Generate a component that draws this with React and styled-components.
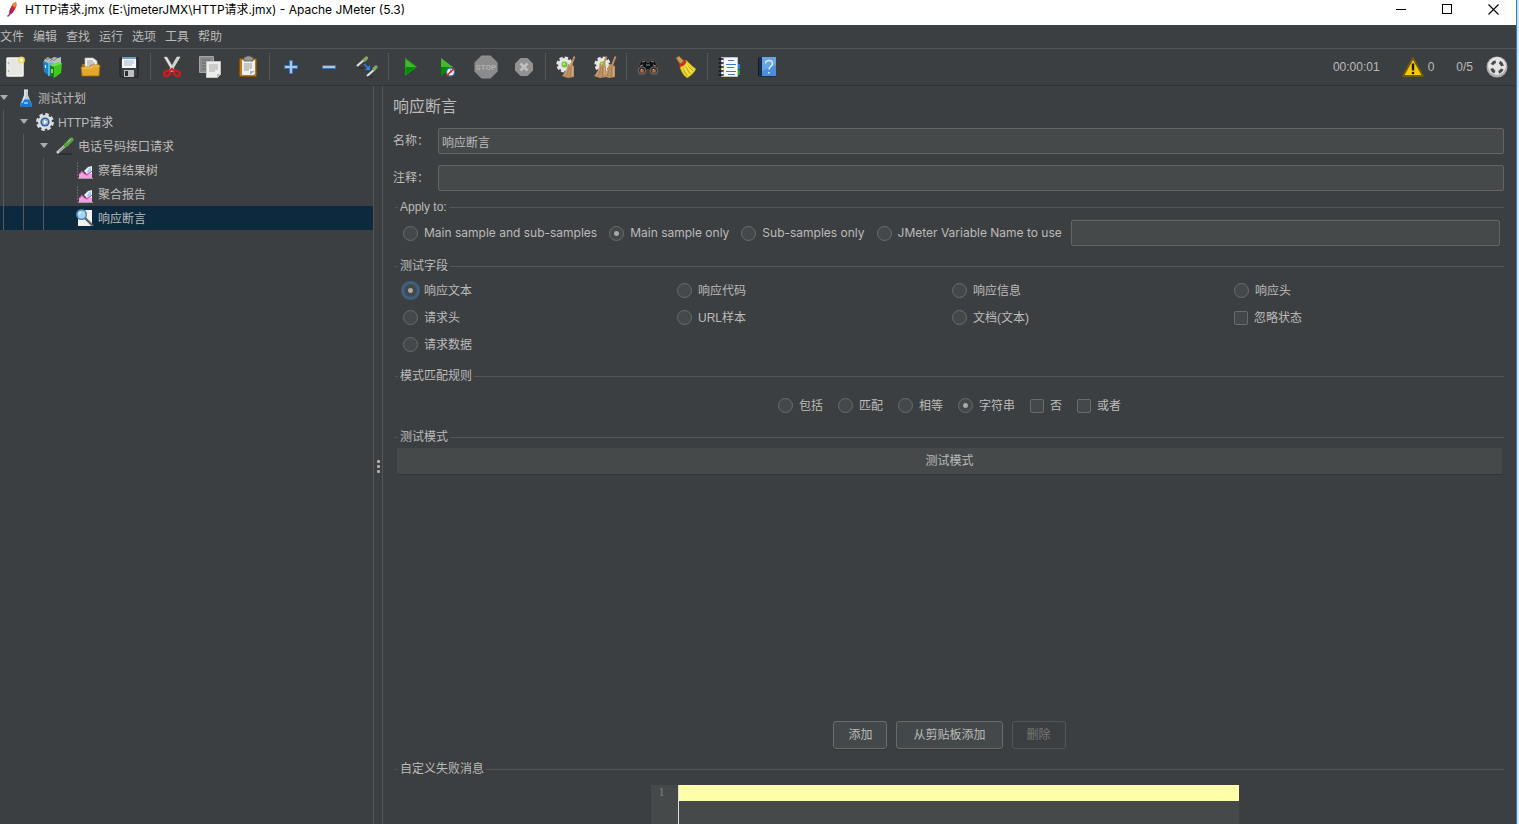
import { useState } from "react";
import styled, { createGlobalStyle } from "styled-components";

const menus = ["文件", "编辑", "查找", "运行", "选项", "工具", "帮助"];

const toolbarGroups = [
  [["新建", NewIcon], ["模板", TemplatesIcon], ["打开", OpenIcon], ["保存", SaveIcon]],
  [["剪切", CutIcon], ["复制", CopyIcon], ["粘贴", PasteIcon]],
  [["展开", PlusIcon], ["折叠", MinusIcon], ["切换", ToggleIcon]],
  [["启动", StartIcon], ["不停顿开始", StartNoPauseIcon], ["停止", StopIcon], ["关闭", ShutdownIcon]],
  [["清除", ClearIcon], ["清除全部", ClearAllIcon]],
  [["搜索", SearchIcon], ["重置搜索", BroomIcon]],
  [["函数助手", FunctionIcon], ["帮助", HelpIcon]],
];

const treeNodes = [
  { level: 0, label: "测试计划", icon: FlaskIcon, open: true },
  { level: 1, label: "HTTP请求", icon: GearIcon, open: true },
  { level: 2, label: "电话号码接口请求", icon: PipetteIcon, open: true },
  { level: 3, label: "察看结果树", icon: ChartIcon },
  { level: 3, label: "聚合报告", icon: ChartIcon },
  { level: 3, label: "响应断言", icon: AssertionIcon },
];

const scopes = ["Main sample and sub-samples", "Main sample only", "Sub-samples only", "JMeter Variable Name to use"];

const testFields = [
  ["响应文本"], ["响应代码"], ["响应信息"], ["响应头"],
  ["请求头"], ["URL样本"], ["文档(文本)"], ["忽略状态", true],
  ["请求数据"],
];

function Choice({ type = "radio", name, label, ...rest }) {
  return (
    <ChoiceLabel>
      {type === "radio" ? <Radio name={name} {...rest} /> : <Checkbox {...rest} />}
      {label}
    </ChoiceLabel>
  )
}

function App() {
  const [selected, setSelected] = useState("响应断言");

  return (
    <Desktop>
      <GlobalStyle />
      <Window>
        <TitleBar>
          <FeatherIcon />
          <WindowTitle>HTTP请求.jmx (E:\jmeterJMX\HTTP请求.jmx) - Apache JMeter (5.3)</WindowTitle>
          <WindowButton aria-label="最小化">
            <svg width="11" height="11"><path d="M0 5.5h10" stroke="#000" /></svg>
          </WindowButton>
          <WindowButton aria-label="最大化">
            <svg width="11" height="11"><rect x=".5" y=".5" width="9" height="9" fill="none" stroke="#000" /></svg>
          </WindowButton>
          <WindowButton aria-label="关闭窗口">
            <svg width="11" height="11"><path d="M.5 .5l10 10M10.5 .5l-10 10" stroke="#000" strokeWidth="1.1" /></svg>
          </WindowButton>
        </TitleBar>

        <MenuBar>
          {menus.map(menu => <MenuButton key={menu}>{menu}</MenuButton>)}
        </MenuBar>

        <Toolbar>
          {toolbarGroups.map((group, i) => (
            <ToolGroup key={i}>
              {group.map(([label, Icon]) => (
                <ToolButton key={label} aria-label={label}><Icon /></ToolButton>
              ))}
            </ToolGroup>
          ))}
          <Status>
            <span>00:00:01</span>
            <Warnings><WarningIcon />0</Warnings>
            <span>0/5</span>
            <ThreadsIcon />
          </Status>
        </Toolbar>

        <Body>
          <Tree role="tree">
            {treeNodes.map(({ level, label, icon: Icon, open }) => (
              <TreeRow
                key={label}
                role="treeitem"
                aria-selected={label === selected}
                $selected={label === selected}
                onClick={() => setSelected(label)}
              >
                {Array.from({ length: level }, (_, i) => <Guide key={i} />)}
                <Arrow viewBox="0 0 8 6">{open ? <path d="M0 0h8L4 5z" fill="#adadad" /> : null}</Arrow>
                <Icon />
                <TreeText>{label}</TreeText>
              </TreeRow>
            ))}
          </Tree>
          <Splitter><i /><i /><i /></Splitter>

          <Panel>
            <Heading>响应断言</Heading>
            <FormRow>
              <label htmlFor="name">名称：</label>
              <TextInput id="name" defaultValue="响应断言" />
            </FormRow>
            <FormRow>
              <label htmlFor="comment">注释：</label>
              <TextInput id="comment" />
            </FormRow>

            <Group>
              <legend>Apply to:</legend>
              <ScopeRow>
                {scopes.map((scope, i) => (
                  <Choice key={scope} name="scope" label={scope} defaultChecked={i === 1} />
                ))}
                <TextInput aria-label="JMeter Variable Name" />
              </ScopeRow>
            </Group>

            <Group>
              <legend>测试字段</legend>
              <FieldGrid>
                {testFields.map(([label, checkbox], i) => (
                  <Choice
                    key={label}
                    name="field"
                    label={label}
                    type={checkbox ? "checkbox" : "radio"}
                    defaultChecked={i === 0}
                    autoFocus={i === 0}
                  />
                ))}
              </FieldGrid>
            </Group>

            <Group>
              <legend>模式匹配规则</legend>
              <RuleRow>
                <Choice name="rule" label="包括" />
                <Choice name="rule" label="匹配" />
                <Choice name="rule" label="相等" />
                <Choice name="rule" label="字符串" defaultChecked />
                <Choice type="checkbox" label="否" />
                <Choice type="checkbox" label="或者" />
              </RuleRow>
            </Group>

            <PatternGroup>
              <legend>测试模式</legend>
              <PatternTable>
                <thead>
                  <tr><th>测试模式</th></tr>
                </thead>
                <tbody />
              </PatternTable>
              <ButtonRow>
                <Button>添加</Button>
                <Button $wide>从剪贴板添加</Button>
                <Button disabled>删除</Button>
              </ButtonRow>
            </PatternGroup>

            <MessageGroup>
              <legend>自定义失败消息</legend>
              <Editor>
                <Gutter>1</Gutter>
                <Code aria-label="自定义失败消息" spellCheck={false} />
              </Editor>
            </MessageGroup>
          </Panel>
        </Body>
      </Window>
    </Desktop>
  )
}

export default App

/* icons */

function FeatherIcon() {
  return (
    <svg width="16" height="18" viewBox="0 0 16 18">
      <path d="M5.5 13.5C5 10.5 6.5 6 9 2.5L12 1l.5 3.5C11.5 8 9 12 7 13z" fill="#cf2340" />
      <path d="M9 2.5L12 .8l.7 2.7-1.7 3-3-2z" fill="#f08a2c" />
      <path d="M5.5 13c-.4-2 .2-4.5 1-6l2.5 4-2 2z" fill="#a3225f" />
      <path d="M6 13l-2.5 2.5" stroke="#7b3b86" strokeWidth="1.4" />
    </svg>
  )
}

function NewIcon() {
  return (
    <Glyph>
      <rect x="3.5" y="2.5" width="17" height="19" rx="1" fill="#f1f1f0" stroke="#c9c9c5" />
      <path d="M5 4h14v16H5z" fill="#e6e6e4" />
      <circle cx="5.5" cy="8" r=".8" fill="#999" />
      <circle cx="5.5" cy="16" r=".8" fill="#999" />
      <circle cx="18.5" cy="5" r="3.5" fill="#efdc54" opacity=".85" />
      <circle cx="18.5" cy="5" r="1.6" fill="#fffde0" />
    </Glyph>
  )
}

function TemplatesIcon() {
  return (
    <Glyph>
      <path d="M3 5l4-3 3 2 3-2 4 1 3-1v8L4 12z" fill="#b9bfc0" />
      <path d="M5 5l4-2M12 6l4-3M9 6l3-2" stroke="#72797b" />
      <path d="M2 6l5 2v12l-4-3z" fill="#1b83c9" />
      <path d="M7 8l5-1v13l-5 1z" fill="#55b6ef" />
      <path d="M9 10l4 2v11l-4-3z" fill="#18810b" />
      <path d="M13 12l8-4-1 10-7 5z" fill="#3fca1e" />
      <path d="M9 10l8-3 4 1-8 4z" fill="#6fdc4e" />
      <path d="M4.5 10v3M11 14v4" stroke="#dff6ff" strokeWidth="1.2" />
    </Glyph>
  )
}

function OpenIcon() {
  return (
    <Glyph>
      <path d="M3 9h5l1-2h9l2 3v11H3z" fill="#a9720f" />
      <path d="M6 3h8l4 3v9H6z" fill="#f2f2f2" stroke="#bbb" strokeWidth=".7" />
      <path d="M8 6h6M8 8h8M8 10h8" stroke="#999" />
      <path d="M2 12h9l1-2h9l-1 11H3z" fill="#e3a72b" stroke="#9c6a0d" strokeWidth=".8" />
      <path d="M3 13h9l1-2h7" stroke="#f6d27b" fill="none" />
    </Glyph>
  )
}

function SaveIcon() {
  return (
    <Glyph>
      <path d="M3 3h18v19H4l-1-1z" fill="#3b3e42" stroke="#1c1e20" />
      <path d="M5 2h14v11H5z" fill="#f4f7fa" />
      <path d="M5 2h14v2H5z" fill="#709cc8" />
      <path d="M7 6h10M7 8h10M7 10h8" stroke="#a0b8cd" />
      <rect x="7" y="15" width="10" height="7" fill="#bdbfc1" />
      <rect x="8" y="16" width="3" height="5" fill="#2c2e31" />
    </Glyph>
  )
}

function CutIcon() {
  return (
    <Glyph>
      <path d="M4 2l3 0 8 14-2 1z" fill="#e9e9e7" stroke="#aaa" strokeWidth=".6" />
      <path d="M20 2l-3 0-8 14 2 1z" fill="#cfcfcc" stroke="#eee" strokeWidth=".6" />
      <g fill="none" stroke="#d81717" strokeWidth="2.2">
        <ellipse cx="7" cy="18.5" rx="3" ry="2.5" transform="rotate(-30 7 18.5)" />
        <ellipse cx="17" cy="18.5" rx="3" ry="2.5" transform="rotate(30 17 18.5)" />
        <path d="M9.5 16l2.5-2 2.5 2" />
      </g>
    </Glyph>
  )
}

function CopyIcon() {
  return (
    <Glyph>
      <path d="M1.5 1.5h14v16h-14z" fill="#888b8c" stroke="#a5a7a7" />
      <path d="M4 5h8M4 8h8M4 11h5M4 14h4" stroke="#66696a" />
      <path d="M8.5 6.5h14v13l-3 3h-11z" fill="#ededeb" stroke="#c4c4c2" />
      <path d="M11 10h9M11 12h9M11 14h9M11 16h6" stroke="#aaa" />
      <path d="M19 22.5v-3.5h3.5z" fill="#bababa" />
    </Glyph>
  )
}

function PasteIcon() {
  return (
    <Glyph>
      <rect x="3.5" y="3.5" width="17" height="18" rx="1" fill="#b6781d" stroke="#80500d" />
      <path d="M6 5h13v14l-2 1H6z" fill="#f0f0ee" />
      <path d="M8 2h2l1-1h3l1 1h2v4H8z" fill="#969891" stroke="#555952" strokeWidth=".8" />
      <path d="M8 9h8M8 11h8M8 13h8M8 15h5" stroke="#9b9b9b" />
      <path d="M14 20v-4h5z" fill="#b4b4b2" />
    </Glyph>
  )
}

function PlusIcon() {
  return (
    <Glyph>
      <path d="M10.5 5.5h3v5h5v3h-5v5h-3v-5h-5v-3h5z" fill="#a6c8ee" stroke="#3d72b5" />
    </Glyph>
  )
}

function MinusIcon() {
  return (
    <Glyph><path d="M5.5 10.5h13v3h-13z" fill="#a6c8ee" stroke="#3d72b5" /></Glyph>
  )
}

function ToggleIcon() {
  return (
    <Glyph>
      <path d="M2 13h7M12 22h6" stroke="#252729" />
      <path d="M2 11l8-7M12 21l8-7" stroke="#dededb" strokeWidth="2.2" />
      <path d="M9.5 5l2-2M19 14l2-2" stroke="#7eaa60" strokeWidth="3.4" strokeLinecap="round" />
      <path d="M9 9l4 4" stroke="#3183ea" strokeWidth="1.5" />
      <path d="M15 10v5h-5z" fill="#3183ea" />
    </Glyph>
  )
}

function StartIcon() {
  return (
    <Glyph>
      <path d="M7 3l12 9H7z" fill="#43b82b" />
      <path d="M7 12h12L7 21z" fill="#078b06" />
      <path d="M7.5 4v16L18 12z" fill="none" stroke="#19a514" strokeWidth=".8" />
    </Glyph>
  )
}

function StartNoPauseIcon() {
  return (
    <Glyph>
      <path d="M5 3l12 9H5z" fill="#43b82b" />
      <path d="M5 12h12L5 21z" fill="#078b06" />
      <circle cx="14.5" cy="17" r="4" fill="#f5f7fa" stroke="#3a74b3" strokeWidth="1.3" />
      <path d="M14.5 17v-2.5M14.5 17h2" stroke="#7c95af" />
      <path d="M10.5 21l8-8" stroke="#d82525" strokeWidth="1.6" />
    </Glyph>
  )
}

function StopIcon() {
  return (
    <Glyph>
      <path d="M7.5 1h9L23 7.5v9L16.5 23h-9L1 16.5v-9z" fill="#8b8b8b" stroke="#929292" />
      <text x="12" y="15" textAnchor="middle" fontSize="8" fill="#b0b0b0" fontWeight="bold" fontFamily="Roboto, sans-serif">STOP</text>
    </Glyph>
  )
}

function ShutdownIcon() {
  return (
    <Glyph>
      <path d="M8.5 3h7L21 8.5v7L15.5 21h-7L3 15.5v-7z" fill="#929292" />
      <path d="M8.5 8.5l7 7M15.5 8.5l-7 7" stroke="#c0c0c0" strokeWidth="2.6" />
    </Glyph>
  )
}

function SmallBroom({ x = 0 }) {
  return (
    <g transform={`translate(${x} 0)`}>
      <path d="M20.5 1.5l-3.5 9" stroke="#c0905f" strokeWidth="2" />
      <path d="M14 9l6 2v11l-6 1-6-2c3-3 5-7 6-12z" fill="#bd9064" />
      <path d="M15 12l-3 9M17 12l-1 10" stroke="#9c7852" strokeWidth=".7" />
      <path d="M18.5 12v9M13.5 14l-3 6" stroke="#d9b288" strokeWidth=".8" />
    </g>
  )
}

function GearShape() {
  return (
    <>
      <circle cx="9.5" cy="9.5" r="6.4" fill="#e6e7e5" />
      <circle cx="9.5" cy="9.5" r="6.8" fill="none" stroke="#e6e7e5" strokeWidth="2.6" strokeDasharray="3.34 2" />
      <circle cx="9.5" cy="9.5" r="3" fill="#6fc335" />
      <circle cx="9" cy="9" r="1.3" fill="#b3ea8c" />
    </>
  )
}

function ClearIcon() {
  return <Glyph><GearShape /><SmallBroom x={-1} /></Glyph>
}

function ClearAllIcon() {
  return <Glyph><GearShape /><SmallBroom x={-7} /><SmallBroom x={2} /></Glyph>
}

function SearchIcon() {
  return (
    <Glyph>
      <path d="M5 5.5l4-1 2 3h2l2-3 4 1 4 10-2 4h-5l-3-5h-2l-3 5H3l-2-4z" fill="#141414" stroke="#555" strokeWidth=".8" />
      <path d="M6 7l3-1M15 6l3 1M10 10h4M4 11l3-1M17 10l3 1" stroke="#8c8c8c" strokeWidth="1.1" fill="none" />
      <g stroke="#6b6b6b" strokeWidth="1.2" fill="#3b2418">
        <circle cx="6" cy="15.5" r="3.5" />
        <circle cx="18" cy="15.5" r="3.5" />
      </g>
      <circle cx="6" cy="16" r="2" fill="#a86a41" />
      <circle cx="18" cy="16" r="2" fill="#a86a41" />
      <path d="M5 15l1-1M17 15l1-1" stroke="#f1c9ad" />
    </Glyph>
  )
}

function BroomIcon() {
  return (
    <Glyph>
      <path d="M2 3l3-2 5 5-4 3z" fill="#c79a5b" stroke="#8b5b21" strokeWidth=".6" />
      <path d="M6 10l6-5c4 4 7 7 10 9-2 4-5 7-9 9-4-3-7-8-7-13z" fill="#ecd332" stroke="#aa8c0d" strokeWidth=".6" />
      <path d="M9 13l4 8M12 12l4 7M14 11l5 5" stroke="#b79814" strokeWidth=".8" />
      <path d="M10 13l5 7M13 11l5 6" stroke="#faf08a" strokeWidth=".7" />
      <path d="M5 9.5c2.5 0 4.500-2 5.500-4.500l2 1.500c-1 3-3 5-6.500 5.500z" fill="#d12a1d" />
    </Glyph>
  )
}

function FunctionIcon() {
  return (
    <Glyph>
      <path d="M20 9h3v5h-3z" fill="#2681db" />
      <path d="M20 15h3v5h-3z" fill="#25a32c" />
      <path d="M4.5 2.5h16v19h-16z" fill="#fafafa" stroke="#c4c4c4" />
      <path d="M11 5.5h6M9 9.5h10M10 12.5h7M9 16.5h10M11 19.5h7" stroke="#397bd0" strokeWidth="1.2" />
      <path d="M6.5 3v18" stroke="#ccc" />
      {[4, 8, 12, 16, 20].map(y => (
        <path key={y} d={`M2 ${y}h4`} stroke="#171717" strokeWidth="1.6" strokeLinecap="round" />
      ))}
    </Glyph>
  )
}

function HelpIcon() {
  return (
    <Glyph>
      <path d="M3 3l4-1v20l-4-1z" fill="#101a29" />
      <path d="M4 2h17v20H4z" fill="#1a2e4d" />
      <path d="M7 2h14v19H7z" fill="#4b8fdc" />
      <path d="M7 2h14v8L7 16z" fill="#68a5e7" />
      <path d="M10.5 8.5c0-4 7-4 7 0 0 3-3.5 3-3.5 6M14 17v1.5" stroke="#d7eaff" strokeWidth="1.6" fill="none" />
    </Glyph>
  )
}

function WarningIcon() {
  return (
    <svg width="22" height="20" viewBox="0 0 22 20">
      <path d="M11 1l10 18H1z" fill="#f6ca06" stroke="#6e5c0b" strokeWidth="1.8" strokeLinejoin="round" />
      <path d="M11 6.5v7" stroke="#1c1800" strokeWidth="2.4" />
      <circle cx="11" cy="16" r="1.3" fill="#1c1800" />
    </svg>
  )
}

function ThreadsIcon() {
  return (
    <svg width="22" height="22" viewBox="0 0 22 22">
      <circle cx="11" cy="11" r="10.5" fill="#aeaeae" />
      <circle cx="11" cy="10" r="9" fill="#e4e4e4" />
      <circle cx="11" cy="11" r="5.5" fill="none" stroke="#484848" strokeWidth="3" strokeDasharray="4.64 4" strokeDashoffset="-2" />
    </svg>
  )
}

function FlaskIcon() {
  return (
    <TreeGlyph>
      <path d="M8 1h4v5l4 10-1 2H5l-1-2L8 6z" fill="#bdccd8" />
      <path d="M6.5 10.5h7l2.5 6-1 1.5H5l-1-1.5z" fill="#1978d4" />
      <path d="M8 1h4M9 2v5l-3 7" stroke="#f0f5f8" fill="none" />
      <path d="M8 14h4" stroke="#74c0fb" strokeWidth="2" />
    </TreeGlyph>
  )
}

function GearIcon() {
  return (
    <TreeGlyph>
      <circle cx="9" cy="9" r="7" fill="#dcdedf" />
      <circle cx="9" cy="9" r="7.6" fill="none" stroke="#dcdedf" strokeWidth="2.6" strokeDasharray="3.57 2.4" />
      <circle cx="9" cy="9" r="4.6" fill="#34609b" />
      <circle cx="9" cy="9" r="3" fill="#93b8e0" />
      <path d="M8 7l3 2-3 2z" fill="#fff" />
    </TreeGlyph>
  )
}

function PipetteIcon() {
  return (
    <TreeGlyph>
      <path d="M2 17h14" stroke="#282b2d" strokeWidth="1.5" />
      <path d="M1 16l11-10" stroke="#c9cec8" strokeWidth="2.8" />
      <path d="M3 14.5l7-6.5" stroke="#7b807d" />
      <path d="M10 8l5.5-5.5" stroke="#569f44" strokeWidth="4.2" strokeLinecap="round" />
      <path d="M11.5 5.500l3.500-3.500" stroke="#a4de93" />
    </TreeGlyph>
  )
}

function ChartIcon() {
  return (
    <TreeGlyph>
      <path d="M1.5 1v16" stroke="#66696b" strokeDasharray="2 1" />
      <path d="M8 10l4-4 4-1v9l-5-1z" fill="#eef3fa" />
      <path d="M11 10l2-3 2-1v6l-3 1z" fill="#a9cdf0" />
      <path d="M3 17v-4l3-3 3 3 3-1 4 1v4z" fill="#f2a0e0" />
      <path d="M3 13.5l3-3 3 3 2 .5 5-4" stroke="#c23aa6" fill="none" strokeWidth=".9" />
      <path d="M2 17.5h15" stroke="#9a9c9d" />
    </TreeGlyph>
  )
}

function AssertionIcon() {
  return (
    <TreeGlyph>
      <path d="M2 1h14v16H2z" fill="#f0f1f1" />
      <path d="M9 9l8 8" stroke="#5a6369" strokeWidth="2.4" />
      <circle cx="5.5" cy="5.5" r="4.8" fill="#a5d5f4" stroke="#4a7ea5" strokeWidth="1.4" />
      <path d="M3 5l2-2" stroke="#e4f5ff" strokeWidth="1.5" />
    </TreeGlyph>
  )
}

/* styles */

const GlobalStyle = createGlobalStyle`
  * {
    box-sizing: border-box;
  }

  body {
    margin: 0;
    overflow: hidden;
    font: 12px/16px "Liberation Sans", "Noto Sans CJK SC", sans-serif;
    color: #bbbbbb;
  }

  button, input, textarea {
    font: inherit;
    color: inherit;
  }

  svg {
    display: block;
    flex: none;
  }
`;

const Glyph = styled.svg.attrs({ viewBox: "0 0 24 24" })`
  width: 24px;
  height: 24px;
`;

const TreeGlyph = styled.svg.attrs({ viewBox: "0 0 18 18" })`
  width: 18px;
  height: 18px;
  margin: 0 4px 0 8px;
`;

const Desktop = styled.div`
  height: 100vh;
  padding-right: 2px;
  background: #dedede;
`;

const Window = styled.div`
  height: 100%;
  display: flex;
  flex-direction: column;
  background: #3c3f41;
  border-right: 1px solid #1883d7;
`;

const TitleBar = styled.header`
  display: flex;
  align-items: center;
  height: 25px;
  flex: none;
  padding: 0 0 6px 4px;
  background: #fff;
  color: #000;
`;

const WindowTitle = styled.h1`
  flex: 1;
  margin: 0 0 0 5px;
  font: 12px/18px Inter, "Noto Sans CJK SC", sans-serif;
`;

const WindowButton = styled.button`
  display: flex;
  align-items: center;
  justify-content: center;
  width: 46px;
  height: 18px;
  padding: 0;
  border: 0;
  background: none;
`;

const MenuBar = styled.nav`
  display: flex;
  gap: 9px;
  height: 24px;
  flex: none;
  border-bottom: 1px solid #555555;
`;

const MenuButton = styled.button`
  padding: 0;
  border: 0;
  background: none;
`;

const Toolbar = styled.div`
  display: flex;
  align-items: center;
  height: 37px;
  flex: none;
  padding-bottom: 1px;
  border-bottom: 1px solid #323232;
`;

const ToolGroup = styled.div`
  display: flex;
  align-items: center;
  gap: 14px;
  height: 27px;
  padding: 0 9px;
  border-right: 1px solid #555555;

  &:first-child {
    padding-left: 3px;
  }

  &:nth-last-child(2) {
    border-right: 0;
  }
`;

const ToolButton = styled.button`
  padding: 0;
  border: 0;
  background: none;
`;

const Status = styled.div`
  display: flex;
  align-items: center;
  gap: 22px;
  margin-left: auto;
  padding-right: 8px;

  > svg {
    margin-left: -9px;
  }
`;

const Warnings = styled.span`
  display: flex;
  align-items: center;
  gap: 4px;
`;

const Body = styled.div`
  flex: 1;
  min-height: 0;
  display: flex;
`;

const Tree = styled.ul`
  flex: 0 0 373px;
  margin: 0;
  padding: 0;
  list-style: none;
`;

const TreeRow = styled.li`
  display: flex;
  align-items: center;
  height: 24px;
  cursor: default;
  background: ${({ $selected }) => $selected ? "#0d293e" : "none"};
`;

const TreeText = styled.span`
  padding-top: 2px;
`;

const Guide = styled.span`
  width: 17px;
  height: 24px;
  margin-left: 3px;
  border-left: 1px solid #555a5c;
`;

const Arrow = styled.svg`
  width: 8px;
  height: 6px;
`;

const Splitter = styled.div`
  display: flex;
  flex-direction: column;
  align-items: center;
  justify-content: center;
  gap: 2px;
  width: 10px;
  padding-top: 22px;
  border: solid #555555;
  border-width: 0 1px;

  i {
    width: 3px;
    height: 3px;
    border-radius: 1px;
    background: #b0b0b0;
  }
`;

const Panel = styled.main`
  flex: 1;
  min-width: 0;
  display: flex;
  flex-direction: column;
  padding: 9px 12px 0 10px;
  overflow: hidden;
`;

const Heading = styled.h2`
  margin: 0 0 9px;
  font-size: 16px;
  line-height: 24px;
  font-weight: normal;
`;

const FormRow = styled.div`
  display: flex;
  align-items: center;
  margin-bottom: 11px;

  label {
    width: 45px;
  }
`;

const TextInput = styled.input`
  flex: 1;
  min-width: 0;
  height: 26px;
  padding: 0 3px;
  border: 1px solid #646464;
  border-radius: 2px;
  outline: none;
  background: #45494a;
`;

const Group = styled.fieldset`
  flex: none;
  min-width: 0;
  margin: 0 0 10px 2px;
  padding: 3px 3px 0;
  border: 0;
  border-top: 1px solid #555555;

  legend {
    padding: 0 2px;
  }

  ${FormRow} + & {
    margin-top: -3px;
  }
`;

const ChoiceLabel = styled.label`
  display: flex;
  align-items: center;
  gap: 6px;
  white-space: nowrap;
`;

const Radio = styled.input.attrs({ type: "radio" })`
  appearance: none;
  flex: none;
  width: 15px;
  height: 15px;
  margin: 0;
  border: 1px solid #6b6b6b;
  border-radius: 50%;
  outline: none;
  background: #43494a;

  &:checked {
    background: radial-gradient(circle, #a8a8a8 2px, #43494a 3px);
  }

  &:focus {
    border-color: #466d94;
    box-shadow: 0 0 0 2px #3d6185;
  }
`;

const Checkbox = styled.input.attrs({ type: "checkbox" })`
  appearance: none;
  flex: none;
  width: 14px;
  height: 14px;
  margin: 0;
  border: 1px solid #6b6b6b;
  border-radius: 2px;
  background: #43494a;

  &:checked {
    background: #a8a8a8;
  }
`;

const ScopeRow = styled.div`
  display: flex;
  align-items: center;
  gap: 12px;
  height: 30px;
  padding: 0 1px 0 5px;
  font-family: Inter, "Noto Sans CJK SC", sans-serif;

  ${TextInput} {
    margin-left: -3px;
  }
`;

const FieldGrid = styled.div`
  display: grid;
  grid-template-columns: 274fr 275fr 282fr 267fr;
  grid-auto-rows: 27px;
  padding-left: 5px;
`;

const RuleRow = styled.div`
  display: flex;
  align-items: center;
  justify-content: center;
  gap: 15px;
  height: 32px;
  padding-top: 5px;
`;

const PatternGroup = styled(Group)`
  flex: 1;
  display: flex;
  flex-direction: column;
  padding: 3px 2px 0;
  margin-bottom: 12px;

  legend {
    margin-left: 1px;
  }
`;

const PatternTable = styled.table`
  width: 100%;
  border-collapse: collapse;

  th {
    height: 26px;
    padding: 0;
    font-weight: normal;
    background: #45494a;
    border-bottom: 1px solid #333638;
  }
`;

const ButtonRow = styled.div`
  display: flex;
  justify-content: center;
  gap: 9px;
  margin-top: auto;
`;

const Button = styled.button`
  height: 28px;
  padding: 0 ${({ $wide }) => $wide ? 16 : 14}px;
  border: 1px solid #6b6b6b;
  border-radius: 3px;
  background: #43494a;
  box-shadow: 0 1px 0 #333537;

  &:disabled {
    color: #777777;
    border-color: #555555;
    background: none;
    box-shadow: none;
  }
`;

const MessageGroup = styled(Group)`
  height: 63px;
  margin-bottom: 0;
`;

const Editor = styled.div`
  display: flex;
  width: 598px;
  max-width: 100%;
  height: 80px;
  margin: 5px auto 0;
  padding-right: 10px;
`;

const Gutter = styled.div`
  width: 28px;
  padding-right: 13px;
  border-right: 1px solid #dddddd;
  background: #45494a;
  color: #808080;
  font: 12px/14px "Liberation Serif", serif;
  text-align: right;
`;

const Code = styled.textarea`
  flex: 1;
  padding: 0;
  border: 0;
  outline: none;
  resize: none;
  line-height: 16px;
  background: linear-gradient(#ffffaa 16px, #45494a 16px);
`;
